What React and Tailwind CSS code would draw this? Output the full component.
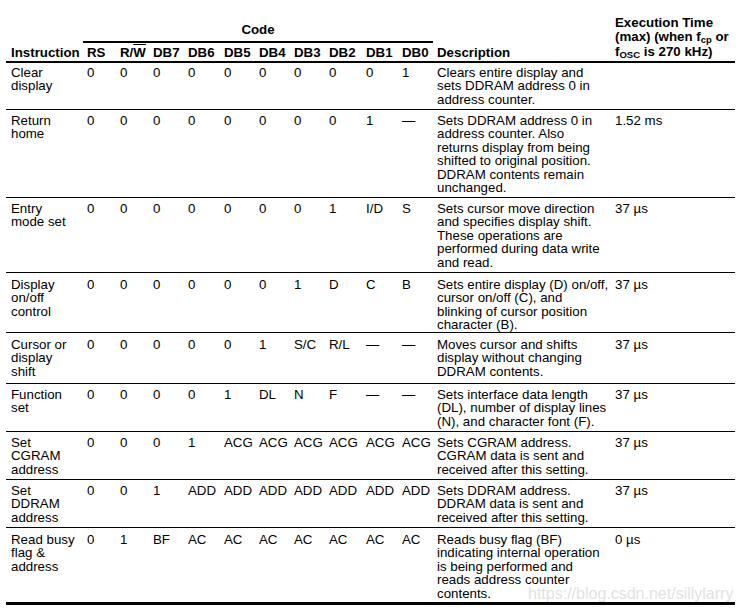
import React from "react";

const COLS =
  "grid grid-cols-[77px_33px_33px_35px_36px_35px_35px_35px_37px_36px_35px_178px_124px]";

const rows = [
  {
    name: ["Clear", "display"],
    codes: ["0", "0", "0", "0", "0", "0", "0", "0", "0", "1"],
    desc: ["Clears entire display and", "sets DDRAM address 0 in", "address counter."],
    time: "",
    cls: "h-[47px] border-b pt-[3px]",
  },
  {
    name: ["Return", "home"],
    codes: ["0", "0", "0", "0", "0", "0", "0", "0", "1", "—"],
    desc: [
      "Sets DDRAM address 0 in",
      "address counter. Also",
      "returns display from being",
      "shifted to original position.",
      "DDRAM contents remain",
      "unchanged.",
    ],
    time: "1.52 ms",
    cls: "h-[88px] border-b pt-[4px]",
  },
  {
    name: ["Entry", "mode set"],
    codes: ["0", "0", "0", "0", "0", "0", "0", "1", "I/D", "S"],
    desc: [
      "Sets cursor move direction",
      "and specifies display shift.",
      "These operations are",
      "performed during data write",
      "and read.",
    ],
    time: "37 µs",
    cls: "h-[75px] border-b pt-[4px]",
  },
  {
    name: ["Display", "on/off", "control"],
    codes: ["0", "0", "0", "0", "0", "0", "1", "D", "C", "B"],
    desc: [
      "Sets entire display (D) on/off,",
      "cursor on/off (C), and",
      "blinking of cursor position",
      "character (B).",
    ],
    time: "37 µs",
    cls: "h-[60px] border-b pt-[5px]",
  },
  {
    name: ["Cursor or", "display", "shift"],
    codes: ["0", "0", "0", "0", "0", "1", "S/C", "R/L", "—", "—"],
    desc: ["Moves cursor and shifts", "display without changing", "DDRAM contents."],
    time: "37 µs",
    cls: "h-[51px] border-b pt-[5px]",
  },
  {
    name: ["Function", "set"],
    codes: ["0", "0", "0", "0", "1", "DL", "N", "F", "—", "—"],
    desc: [
      "Sets interface data length",
      "(DL), number of display lines",
      "(N), and character font (F).",
    ],
    time: "37 µs",
    cls: "h-[48px] border-b pt-[4px]",
  },
  {
    name: ["Set", "CGRAM", "address"],
    codes: ["0", "0", "0", "1", "ACG", "ACG", "ACG", "ACG", "ACG", "ACG"],
    desc: ["Sets CGRAM address.", "CGRAM data is sent and", "received after this setting."],
    time: "37 µs",
    cls: "h-[48px] border-b pt-[4px]",
  },
  {
    name: ["Set", "DDRAM", "address"],
    codes: ["0", "0", "1", "ADD", "ADD", "ADD", "ADD", "ADD", "ADD", "ADD"],
    desc: ["Sets DDRAM address.", "DDRAM data is sent and", "received after this setting."],
    time: "37 µs",
    cls: "h-[48px] border-b pt-[4px]",
  },
  {
    name: ["Read busy", "flag &", "address"],
    codes: ["0", "1", "BF", "AC", "AC", "AC", "AC", "AC", "AC", "AC"],
    desc: [
      "Reads busy flag (BF)",
      "indicating internal operation",
      "is being performed and",
      "reads address counter",
      "contents.",
    ],
    time: "0 µs",
    cls: "h-[77px] border-b-[3px] pt-[5px]",
  },
];

const labels = ["RS", "R/W", "DB7", "DB6", "DB5", "DB4", "DB3", "DB2", "DB1", "DB0"];

function Lines({ items }) {
  return items.map((t, i) => (
    <div key={i} className="whitespace-nowrap">
      {t}
    </div>
  ));
}

export default function App() {
  return (
    <div
      className="relative w-[742px] h-[615px] bg-white text-black pl-[6px] text-[13.3px] leading-[13.4px]"
      style={{ fontFamily: '"Liberation Sans", Arial, Helvetica, sans-serif' }}
    >
      <div className="w-[729px]">
        {/* header */}
        <div className={`${COLS} grid-rows-[1fr_auto] h-[63px] border-b-2 border-black font-bold`}>
          <div className="col-start-1 row-start-1 row-span-2 self-end pl-[5px] pb-[2px]">
            Instruction
          </div>
          <div className="col-start-2 col-span-10 row-start-1 self-end border-b-2 border-black text-center pb-[4px]">
            Code
          </div>
          {labels.map((l, i) => (
            <div key={l} className="row-start-2 pl-[4px] pt-[3px] pb-[2px] whitespace-nowrap">
              {l === "R/W" ? (
                <>
                  R/<span className="overline">W</span>
                </>
              ) : (
                l
              )}
            </div>
          ))}
          <div className="col-start-12 row-start-1 row-span-2 self-end pl-[4px] pb-[2px]">
            Description
          </div>
          <div className="col-start-13 row-start-1 row-span-2 self-end pl-[4px] pb-[2px] leading-[14.5px]">
            <div className="whitespace-nowrap">Execution Time</div>
            <div className="whitespace-nowrap">
              (max) (when f<sub className="text-[9.5px]">cp</sub> or
            </div>
            <div className="whitespace-nowrap">
              f<sub className="text-[9.5px]">OSC</sub> is 270 kHz)
            </div>
          </div>
        </div>

        {/* body */}
        {rows.map((r, ri) => (
          <div key={ri} className={`${COLS} items-start border-black ${r.cls}`}>
            <div className="pl-[5px]">
              <Lines items={r.name} />
            </div>
            {r.codes.map((c, ci) => (
              <div key={ci} className="pl-[4px] whitespace-nowrap">
                {c}
              </div>
            ))}
            <div className="pl-[4px]">
              <Lines items={r.desc} />
            </div>
            <div className="pl-[4px] whitespace-nowrap">{r.time}</div>
          </div>
        ))}
      </div>

      <div className="absolute left-[528px] top-[586px] text-[16px] leading-[16px] text-[#d9d9d9]/80 whitespace-nowrap pointer-events-none">
        https://blog.csdn.net/sillylarry
      </div>
    </div>
  );
}
